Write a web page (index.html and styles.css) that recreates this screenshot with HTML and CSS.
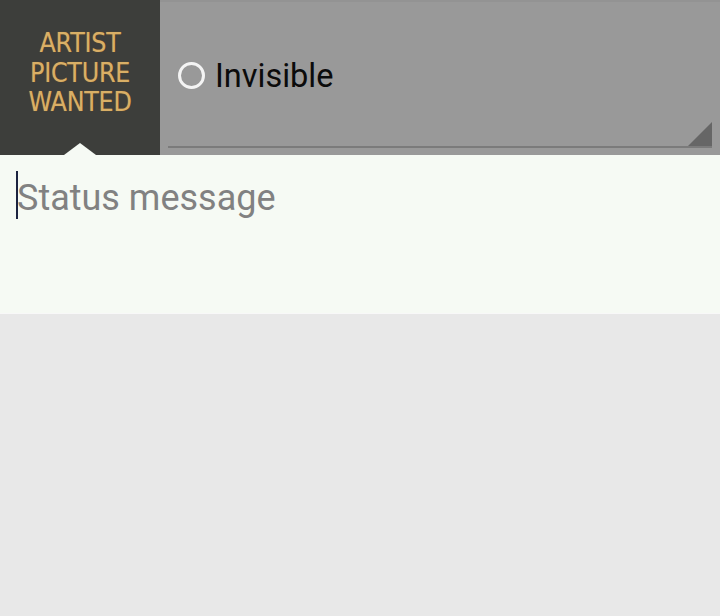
FILE: index.html
```html
<!DOCTYPE html>
<html>
<head>
<meta charset="utf-8">
<link rel="stylesheet" href="styles.css">
</head>
<body>
<div class="header">
  <div class="avatar">
    <div class="avatar-art">ARTIST<br>PICTURE<br>WANTED</div>
    <span class="pointer"></span>
  </div>
  <div class="presence">
    <div class="presence-row">
      <span class="radio"></span>
      <span class="presence-label">Invisible</span>
    </div>
    <span class="spinner-corner"></span>
  </div>
</div>
<div class="status">
  <span class="caret"></span><span class="placeholder">Status message</span>
</div>
<div class="rest"></div>
</body>
</html>
```
FILE: styles.css
```css
html, body {
  margin: 0;
  padding: 0;
  background: #e8e8e8;
  font-family: Roboto, "Noto Sans", sans-serif;
}

.header {
  display: flex;
  height: 155px;
}

.avatar {
  position: relative;
  width: 160px;
  flex: none;
  background: #3d3e3b;
  display: flex;
  align-items: center;
  justify-content: center;
}

.avatar-art {
  font-family: "DejaVu Sans", sans-serif;
  font-size: 26px;
  line-height: 29.5px;
  color: #d9af66;
  text-align: center;
  letter-spacing: -0.3px;
  transform: scaleX(0.92);
  margin-top: -8px;
  text-shadow: 0 0 1px rgba(200, 120, 30, 0.6);
}

.pointer {
  position: absolute;
  left: 64px;
  bottom: 0;
  width: 0;
  height: 0;
  border-left: 16px solid transparent;
  border-right: 16px solid transparent;
  border-bottom: 12px solid #f6faf4;
}

.presence {
  position: relative;
  flex: 1;
  background: #999999;
  border-top: 2px solid #939393;
}

.presence-row {
  display: flex;
  align-items: center;
  gap: 10px;
  margin: 0 8px;
  padding-left: 10px;
  padding-top: 2px;
  border-bottom: 2px solid #7b7b7b;
  box-sizing: border-box;
  height: 146px;
}

.radio {
  width: 27px;
  height: 27px;
  border: 3px solid #f4f4f4;
  border-radius: 50%;
  box-sizing: border-box;
  flex: none;
}

.presence-label {
  font-size: 32.5px;
  color: #0b0b0b;
  margin-top: 1px;
}

.spinner-corner {
  position: absolute;
  right: 8px;
  top: 120px;
  width: 0;
  height: 0;
  border-left: 24px solid transparent;
  border-bottom: 24px solid #666666;
}

.status {
  height: 159px;
  background: #f6faf4;
  border-bottom: 1px solid #f8f8f8;
  padding: 16px 0 0 16px;
  box-sizing: border-box;
  display: flex;
  align-items: flex-start;
}

.caret {
  width: 2px;
  height: 48px;
  background: #1c2340;
  flex: none;
}

.placeholder {
  font-size: 36px;
  line-height: 50px;
  color: #818181;
  margin-top: 2px;
  margin-left: -1px;
}

.rest {
  height: 301px;
}
```
